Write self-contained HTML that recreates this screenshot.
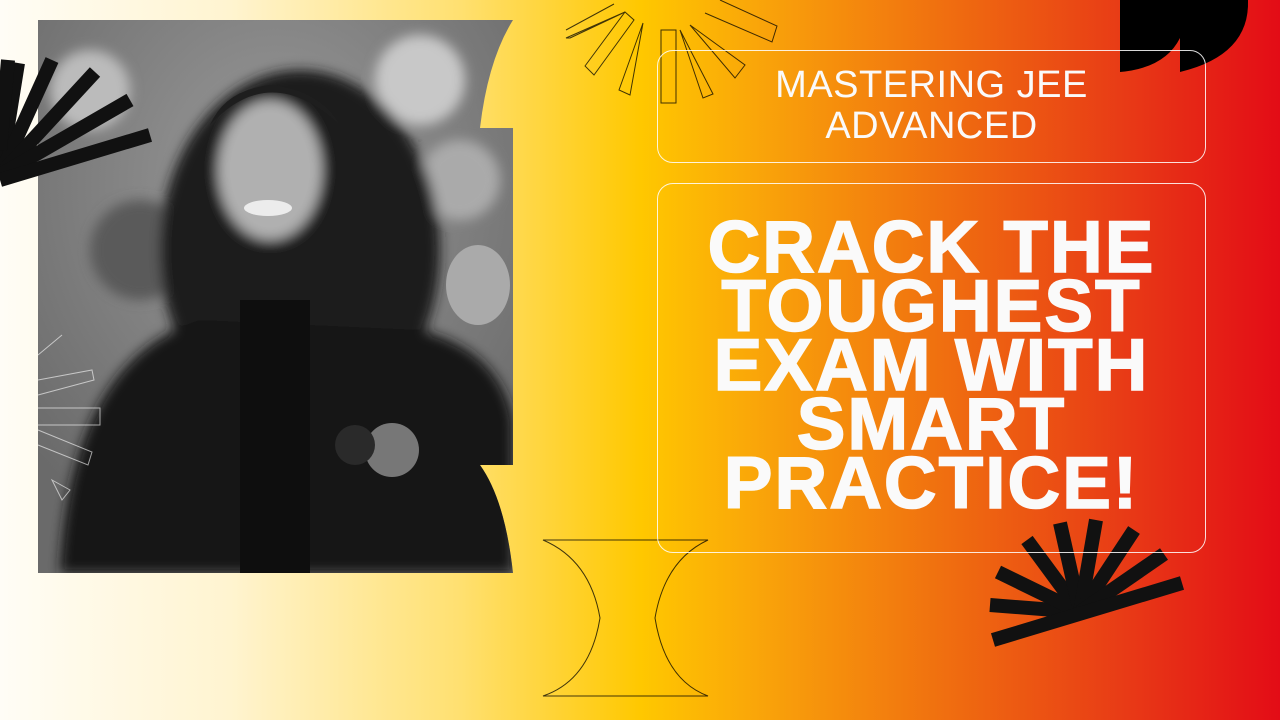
<!DOCTYPE html>
<html><head><meta charset="utf-8"><style>
html,body{margin:0;padding:0}
body{width:1280px;height:720px;overflow:hidden;position:relative;background:linear-gradient(90deg,#fffdf6 0%,#fff4d0 18%,#ffe070 36%,#ffc800 50%,#f9a20a 60%,#ef6a10 75%,#e83a16 88%,#e30c16 100%);font-family:"Liberation Sans",sans-serif}
.box{position:absolute;border:1px solid rgba(255,255,255,.85);border-radius:16px;left:657px;width:549px;box-sizing:border-box;color:#fafafa;text-align:center}
.b1{top:50px;height:113px;font-size:38px;line-height:41px;padding-top:14px;letter-spacing:.5px}
.b2{top:183px;height:370px;font-size:73px;font-weight:900;line-height:59px;padding-top:34px;letter-spacing:2px;-webkit-text-stroke:1.5px #fafafa}
svg{position:absolute;left:0;top:0}
</style></head><body>
<svg width="1280" height="720">
<defs>
<clipPath id="ph"><path d="M38 20 H513 Q488 60 480 128 H513 V465 H480 Q505 500 513 573 H38 Z"/></clipPath>
<radialGradient id="bg" cx="0.5" cy="0.3" r="0.7"><stop offset="0" stop-color="#9a9a9a"/><stop offset="1" stop-color="#6a6a6a"/></radialGradient>
<filter id="bl"><feGaussianBlur stdDeviation="6"/></filter>
</defs>
<g clip-path="url(#ph)">
<rect x="38" y="20" width="475" height="553" fill="url(#bg)"/>
<g filter="url(#bl)">
<circle cx="90" cy="90" r="40" fill="#bbb"/><circle cx="420" cy="80" r="45" fill="#c8c8c8"/><circle cx="140" cy="250" r="50" fill="#5a5a5a"/><circle cx="460" cy="180" r="40" fill="#aaa"/>
<ellipse cx="300" cy="250" rx="140" ry="180" fill="#1e1e1e"/>
<path d="M60 573 Q70 360 200 320 L420 330 Q500 350 513 420 V573 Z" fill="#161616"/>
<ellipse cx="270" cy="170" rx="52" ry="70" fill="#b0b0b0"/>
</g>
<path d="M210 125 Q270 60 340 125 Q320 90 270 85 Q225 90 210 125Z" fill="#1e1e1e"/>
<ellipse cx="268" cy="208" rx="24" ry="8" fill="#ececec"/>
<rect x="240" y="300" width="70" height="273" fill="#0e0e0e"/>
<ellipse cx="478" cy="285" rx="32" ry="40" fill="#aaaaaa"/>
<circle cx="392" cy="450" r="27" fill="#777"/>
<circle cx="355" cy="445" r="20" fill="#2a2a2a"/>
</g>
<g stroke="#111" stroke-width="14" stroke-linecap="butt">
<line x1="1080" y1="612" x2="990" y2="605"/>
<line x1="1080" y1="612" x2="998" y2="572"/>
<line x1="1080" y1="612" x2="1027" y2="540"/>
<line x1="1080" y1="612" x2="1060" y2="523"/>
<line x1="1080" y1="612" x2="1096" y2="520"/>
<line x1="1080" y1="612" x2="1134" y2="530"/>
<line x1="1080" y1="612" x2="1164" y2="554"/>
<line x1="993" y1="640" x2="1182" y2="583"/>
<line x1="0" y1="175" x2="18" y2="63"/>
<line x1="0" y1="175" x2="52" y2="60"/>
<line x1="0" y1="175" x2="95" y2="72"/>
<line x1="0" y1="175" x2="130" y2="100"/>
<line x1="0" y1="180" x2="150" y2="135"/>
<line x1="0" y1="150" x2="8" y2="60"/>
</g>
<g fill="none" stroke="#000" stroke-width="1" opacity=".75">
<path d="M566 30 L614 4 M570 38 L625 12 L566 38 Z"/>
<path d="M585 66 L625 12 L634 20 L594 75 Z"/>
<path d="M619 90 L643 23 L630 95 Z"/>
<path d="M661 30 L661 103 L676 103 L676 30 Z"/>
<path d="M680 30 L703 98 L713 94 Z"/>
<path d="M690 25 L735 78 L745 65 Z"/>
<path d="M705 13 L772 42 L777 26 L720 0"/>
<path d="M543 540 H708 Q665 560 655 618 Q665 680 708 696 H543 Q590 680 600 618 Q590 560 543 540 Z"/>
<path d="M38 355 L62 335 M38 380 L92 370 L94 380 L38 395 M38 408 L100 408 L100 425 L38 425 M38 430 L92 452 L88 465 L38 445 M52 480 L70 490 L62 500 Z" stroke="#fff" opacity=".8"/>
</g>
<path d="M1120 0 H1180 V38 Q1165 68 1120 72 Z" fill="#000"/>
<path d="M1180 0 H1248 Q1250 55 1180 72 Z" fill="#000"/>
</svg>
<div class="box b1">MASTERING JEE<br>ADVANCED</div>
<div class="box b2">CRACK THE<br>TOUGHEST<br>EXAM WITH<br>SMART<br>PRACTICE!</div>
</body></html>
